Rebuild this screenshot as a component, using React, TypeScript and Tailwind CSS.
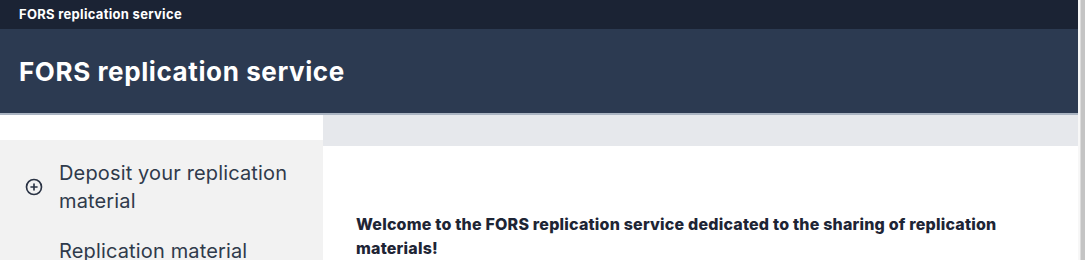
import { CirclePlus } from "lucide-react";

export default function App() {
  return (
    <div className="flex h-[260px] w-[1085px] overflow-hidden bg-white font-['Inter',sans-serif]">
      <div className="flex w-[1078px] flex-col">
        <div className="flex h-[29px] shrink-0 items-center bg-[#1b2334] px-[19px]">
          <span className="text-[13px] font-bold tracking-[0.3px] text-white">
            FORS replication service
          </span>
        </div>
        <div className="flex h-[86px] shrink-0 items-center border-b-2 border-[#aab4c2] bg-[#2c3a51] px-[19px]">
          <h1 className="text-[26px] font-bold tracking-[0.6px] text-white">
            FORS replication service
          </h1>
        </div>
        <div className="flex flex-1">
          <aside className="flex w-[323px] flex-col">
            <div className="h-[25px] bg-white" />
            <nav className="flex flex-1 flex-col bg-[#f2f2f2] pt-[19px]">
              <a className="flex items-center gap-[16px] pl-[25px] pr-4 text-[20px] leading-[28px] tracking-[0.15px] text-[#2f3a4b]">
                <CirclePlus size={18} strokeWidth={2.2} className="shrink-0 text-[#2a3344]" />
                <span>
                  Deposit your replication
                  <br />
                  material
                </span>
              </a>
              <a className="mt-[22px] pl-[59px] text-[20px] leading-[28px] tracking-[0.15px] text-[#2f3a4b]">
                Replication material
              </a>
            </nav>
          </aside>
          <main className="flex flex-1 flex-col">
            <div className="h-[31px] bg-[#e6e8ec]" />
            <div className="px-[33px] pt-[66px]">
              <p className="max-w-[690px] text-[16px] font-extrabold leading-[24px] tracking-[0.2px] text-[#1e2535]">
                Welcome to the FORS replication service dedicated to the sharing of replication
                materials!
              </p>
            </div>
          </main>
        </div>
      </div>
      <div className="flex w-[7px]">
        <div className="w-[2px] bg-[#f7f7f7]" />
        <div className="w-[1px] bg-[#dcdcdc]" />
        <div className="flex-1 bg-[#c4c4c4]" />
      </div>
    </div>
  );
}
